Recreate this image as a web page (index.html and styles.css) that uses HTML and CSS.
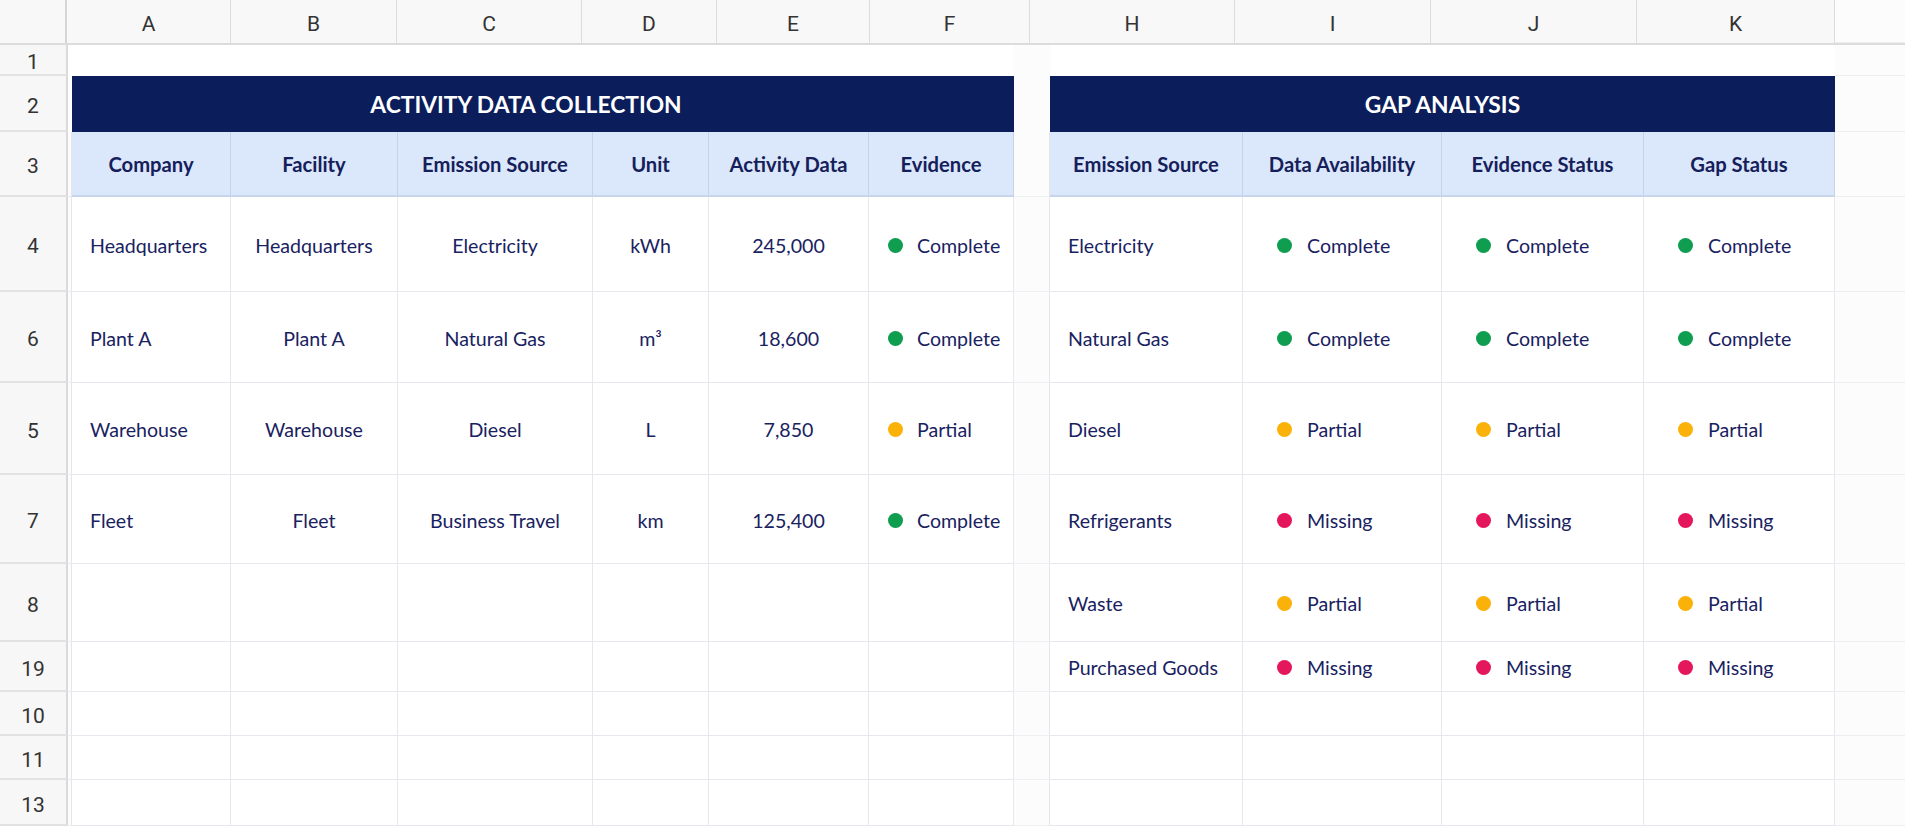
FILE: index.html
```html
<!DOCTYPE html>
<html lang="en">
<head>
<meta charset="utf-8">
<title>Activity Data Collection &amp; Gap Analysis</title>
<link rel="stylesheet" href="styles.css">
</head>
<body>
<div class="sheet">
  <div class="colhead">
    <div class="ch corner"></div>
    <div class="ch w-a">A</div>
    <div class="ch w-b">B</div>
    <div class="ch w-c">C</div>
    <div class="ch w-d">D</div>
    <div class="ch w-e">E</div>
    <div class="ch w-f">F</div>
    <div class="ch w-h">H</div>
    <div class="ch w-i">I</div>
    <div class="ch w-j">J</div>
    <div class="ch w-k">K</div>
    <div class="ch rest"></div>
  </div>

  <div class="row h-1 blank">
    <div class="rn">1</div>
    <div class="sp"></div>
    <div class="c"></div><div class="c"></div><div class="c"></div><div class="c"></div><div class="c"></div><div class="c"></div>
    <div class="gap"></div>
    <div class="c"></div><div class="c"></div><div class="c"></div><div class="c"></div>
    <div class="rest"></div>
  </div>

  <div class="row h-2">
    <div class="rn">2</div>
    <div class="sp plain"></div>
    <div class="title t1">ACTIVITY DATA COLLECTION</div>
    <div class="gap plain"></div>
    <div class="title t2">GAP ANALYSIS</div>
    <div class="rest"></div>
  </div>

  <div class="row h-3 head">
    <div class="rn">3</div>
    <div class="sp"></div>
    <div class="hc">Company</div>
    <div class="hc">Facility</div>
    <div class="hc">Emission Source</div>
    <div class="hc">Unit</div>
    <div class="hc">Activity Data</div>
    <div class="hc">Evidence</div>
    <div class="gap"></div>
    <div class="hc">Emission Source</div>
    <div class="hc">Data Availability</div>
    <div class="hc">Evidence Status</div>
    <div class="hc">Gap Status</div>
    <div class="rest"></div>
  </div>

  <div class="row h-4">
    <div class="rn">4</div>
    <div class="sp"></div>
    <div class="c left">Headquarters</div>
    <div class="c">Headquarters</div>
    <div class="c">Electricity</div>
    <div class="c">kWh</div>
    <div class="c">245,000</div>
    <div class="c st ev"><span class="dot ok"></span>Complete</div>
    <div class="gap"></div>
    <div class="c left">Electricity</div>
    <div class="c st"><span class="dot ok"></span>Complete</div>
    <div class="c st"><span class="dot ok"></span>Complete</div>
    <div class="c st"><span class="dot ok"></span>Complete</div>
    <div class="rest"></div>
  </div>

  <div class="row h-6">
    <div class="rn">6</div>
    <div class="sp"></div>
    <div class="c left">Plant A</div>
    <div class="c">Plant A</div>
    <div class="c">Natural Gas</div>
    <div class="c">m³</div>
    <div class="c">18,600</div>
    <div class="c st ev"><span class="dot ok"></span>Complete</div>
    <div class="gap"></div>
    <div class="c left">Natural Gas</div>
    <div class="c st"><span class="dot ok"></span>Complete</div>
    <div class="c st"><span class="dot ok"></span>Complete</div>
    <div class="c st"><span class="dot ok"></span>Complete</div>
    <div class="rest"></div>
  </div>

  <div class="row h-5">
    <div class="rn">5</div>
    <div class="sp"></div>
    <div class="c left">Warehouse</div>
    <div class="c">Warehouse</div>
    <div class="c">Diesel</div>
    <div class="c">L</div>
    <div class="c">7,850</div>
    <div class="c st ev"><span class="dot part"></span>Partial</div>
    <div class="gap"></div>
    <div class="c left">Diesel</div>
    <div class="c st"><span class="dot part"></span>Partial</div>
    <div class="c st"><span class="dot part"></span>Partial</div>
    <div class="c st"><span class="dot part"></span>Partial</div>
    <div class="rest"></div>
  </div>

  <div class="row h-7">
    <div class="rn">7</div>
    <div class="sp"></div>
    <div class="c left">Fleet</div>
    <div class="c">Fleet</div>
    <div class="c">Business Travel</div>
    <div class="c">km</div>
    <div class="c">125,400</div>
    <div class="c st ev"><span class="dot ok"></span>Complete</div>
    <div class="gap"></div>
    <div class="c left">Refrigerants</div>
    <div class="c st"><span class="dot miss"></span>Missing</div>
    <div class="c st"><span class="dot miss"></span>Missing</div>
    <div class="c st"><span class="dot miss"></span>Missing</div>
    <div class="rest"></div>
  </div>

  <div class="row h-8">
    <div class="rn">8</div>
    <div class="sp"></div>
    <div class="c"></div><div class="c"></div><div class="c"></div><div class="c"></div><div class="c"></div><div class="c"></div>
    <div class="gap"></div>
    <div class="c left">Waste</div>
    <div class="c st"><span class="dot part"></span>Partial</div>
    <div class="c st"><span class="dot part"></span>Partial</div>
    <div class="c st"><span class="dot part"></span>Partial</div>
    <div class="rest"></div>
  </div>

  <div class="row h-19">
    <div class="rn">19</div>
    <div class="sp"></div>
    <div class="c"></div><div class="c"></div><div class="c"></div><div class="c"></div><div class="c"></div><div class="c"></div>
    <div class="gap"></div>
    <div class="c left">Purchased Goods</div>
    <div class="c st"><span class="dot miss"></span>Missing</div>
    <div class="c st"><span class="dot miss"></span>Missing</div>
    <div class="c st"><span class="dot miss"></span>Missing</div>
    <div class="rest"></div>
  </div>

  <div class="row h-10">
    <div class="rn">10</div>
    <div class="sp"></div>
    <div class="c"></div><div class="c"></div><div class="c"></div><div class="c"></div><div class="c"></div><div class="c"></div>
    <div class="gap"></div>
    <div class="c"></div><div class="c"></div><div class="c"></div><div class="c"></div>
    <div class="rest"></div>
  </div>

  <div class="row h-11">
    <div class="rn">11</div>
    <div class="sp"></div>
    <div class="c"></div><div class="c"></div><div class="c"></div><div class="c"></div><div class="c"></div><div class="c"></div>
    <div class="gap"></div>
    <div class="c"></div><div class="c"></div><div class="c"></div><div class="c"></div>
    <div class="rest"></div>
  </div>

  <div class="row h-13">
    <div class="rn">13</div>
    <div class="sp"></div>
    <div class="c"></div><div class="c"></div><div class="c"></div><div class="c"></div><div class="c"></div><div class="c"></div>
    <div class="gap"></div>
    <div class="c"></div><div class="c"></div><div class="c"></div><div class="c"></div>
    <div class="rest"></div>
  </div>
</div>
</body>
</html>
```

FILE: styles.css
```css
* { box-sizing: border-box; }

html, body {
  margin: 0;
  padding: 0;
  background: #ffffff;
  overflow: hidden;
}

.sheet {
  width: 1905px;
  height: 826px;
  overflow: hidden;
  font-family: "Lato", "Open Sans", sans-serif;
  color: #19225f;
}

/* ---------- column letters ---------- */
.colhead {
  display: flex;
  height: 45px;
  background: #f8f8f8;
  border-bottom: 2px solid #dcdcdc;
}
.ch {
  flex: none;
  display: flex;
  align-items: center;
  justify-content: center;
  padding-top: 4px;
  border-right: 1px solid #dcdcdc;
  font-family: "Roboto", "Liberation Sans", sans-serif;
  font-size: 21px;
  color: #333333;
}
.ch.corner { width: 67px; border-right: 2px solid #d6d6d6; }
.ch.w-a { width: 164px; }
.ch.w-b { width: 166px; }
.ch.w-c { width: 185px; }
.ch.w-d { width: 135px; }
.ch.w-e { width: 153px; }
.ch.w-f { width: 160px; }
.ch.w-h { width: 205px; }
.ch.w-i { width: 196px; }
.ch.w-j { width: 206px; }
.ch.w-k { width: 198px; }
.ch.rest { flex: 1; border-right: none; }

/* ---------- body rows ---------- */
.row {
  display: grid;
  grid-template-columns: 68px 4px 159px 167px 195px 116px 160px 145px 36px 193px 199px 202px 191px 1fr;
}
.h-1 { height: 31px; }
.h-2 { height: 56px; }
.h-3 { height: 65px; }
.h-4 { height: 95px; }
.h-6 { height: 91px; }
.h-5 { height: 92px; }
.h-7 { height: 89px; }
.h-8 { height: 78px; }
.h-19 { height: 50px; }
.h-10 { height: 44px; }
.h-11 { height: 44px; }
.h-13 { height: 46px; }

.rn {
  display: flex;
  align-items: center;
  justify-content: center;
  padding-top: 5px;
  background: #f7f7f7;
  border-right: 2px solid #dadada;
  border-bottom: 2px solid #e2e2e2;
  font-family: "Roboto", "Liberation Sans", sans-serif;
  font-size: 21px;
  color: #333333;
}

.sp {
  background: #fcfcfd;
  border-bottom: 1px solid #eceef2;
  border-right: 1px solid #e3e5eb;
}
.gap {
  background: #fcfcfd;
  border-bottom: 1px solid #eef0f3;
  border-right: 1px solid #e3e5eb;
}
.rest {
  background: #fcfcfc;
  border-bottom: 1px solid #eceef1;
}

.c {
  display: flex;
  align-items: center;
  justify-content: center;
  padding-top: 2px;
  border-right: 1px solid #e6e8ee;
  border-bottom: 1px solid #e6e8ee;
  font-size: 19.6px;
  white-space: nowrap;
}
.c.left { justify-content: flex-start; padding-left: 18px; }
.c.st { justify-content: flex-start; padding-left: 34px; gap: 15px; }
.c.st.ev { padding-left: 19px; gap: 14px; }

.dot {
  flex: none;
  width: 15px;
  height: 15px;
  border-radius: 50%;
}
.dot.ok { background: #0f9d50; }
.dot.part { background: #fbb208; }
.dot.miss { background: #e5175c; }

/* row 1 : plain white */
.blank .c, .blank .sp, .blank .gap { border: none; background: #ffffff; }
.blank .gap { background: #fcfcfc; }

/* title bars */
.sp.plain, .gap.plain { border: none; background: #ffffff; }
.gap.plain { background: #fcfcfc; }
.title {
  display: flex;
  align-items: center;
  justify-content: center;
  background: #0b1e5b;
  color: #ffffff;
  font-weight: 700;
  font-size: 22.8px;
  white-space: nowrap;
}
.title.t1 { grid-column: 3 / span 6; padding-right: 34px; }
.title.t2 { grid-column: 10 / span 4; }

/* column headers */
.hc {
  display: flex;
  align-items: center;
  justify-content: center;
  background: #dbe7fb;
  border-right: 1px solid #c6d3ea;
  border-bottom: 2px solid #c7d4ea;
  font-weight: 700;
  font-size: 20.2px;
  color: #15205a;
  white-space: nowrap;
}
.head .sp { border-bottom-color: #e6e8ee; }
```
